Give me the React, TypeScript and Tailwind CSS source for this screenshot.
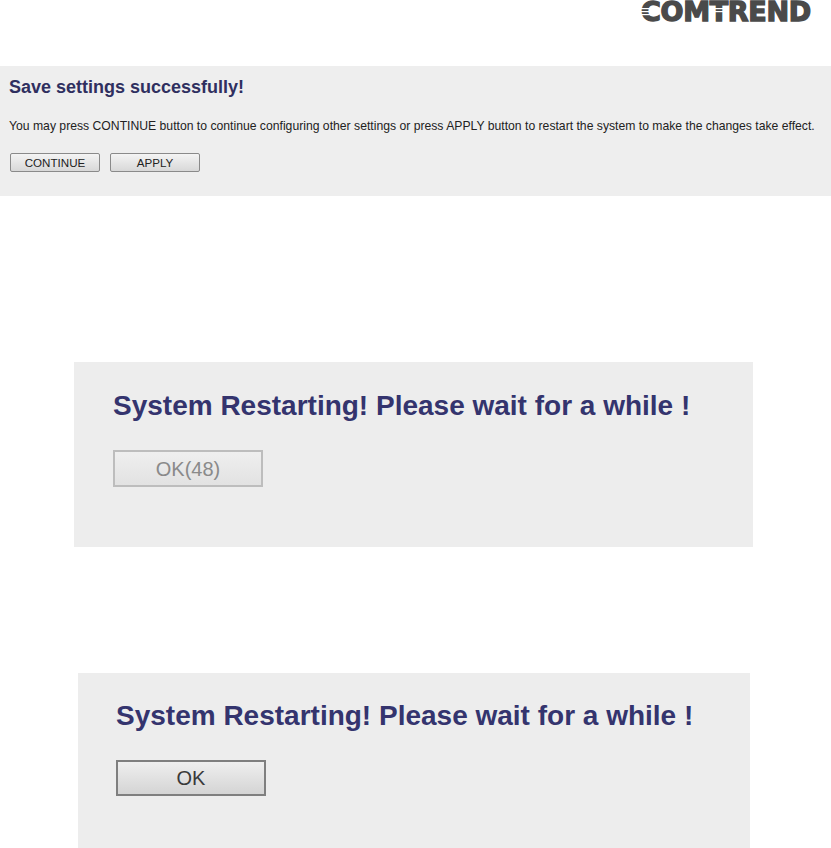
export default function App() {
  return (
    <div className="w-[831px] h-[848px] overflow-hidden bg-white font-['Liberation_Sans',Arial,sans-serif] flex flex-col">
      <header className="h-[66px] shrink-0 flex justify-end items-start pr-[20px]">
        <div className="relative w-[170px] h-[24px]">
          <span className="block font-['DejaVu_Sans',sans-serif] font-bold text-[27px] leading-[24px] tracking-[-0.3px] text-[#4a4a4a] whitespace-nowrap [-webkit-text-stroke:1.4px_#4a4a4a]">COMTREND</span>
          <svg className="absolute left-0 top-0" width="170" height="24" viewBox="0 0 170 24" aria-hidden="true">
            <g fill="#ffffff">
              <rect x="0" y="8" width="12" height="1.2" />
              <rect x="0" y="11" width="12" height="1.2" />
              <rect x="0" y="14" width="12" height="1.2" />
              <rect x="70" y="8" width="17" height="1.2" />
              <rect x="70" y="11" width="17" height="1.2" />
            </g>
          </svg>
        </div>
      </header>

      <section className="h-[130px] shrink-0 bg-[#eeeeee] pl-[9px] pt-[10px]">
        <h1 className="text-[18px] leading-[22px] font-bold text-[#2f2f5f] whitespace-nowrap">Save settings successfully!</h1>
        <p className="mt-[21px] text-[12.2px] leading-[14px] text-[#222222] whitespace-nowrap">You may press CONTINUE button to continue configuring other settings or press APPLY button to restart the system to make the changes take effect.</p>
        <div className="mt-[20px] ml-px flex gap-[10px]">
          <button className="w-[90px] h-[19px] rounded-[2px] border border-[#8a8a8a] bg-gradient-to-b from-[#f4f4f4] to-[#d8d8d8] text-[11.6px] leading-[16px] text-[#222222]">CONTINUE</button>
          <button className="w-[90px] h-[19px] rounded-[2px] border border-[#8a8a8a] bg-gradient-to-b from-[#f4f4f4] to-[#d8d8d8] text-[11.6px] leading-[16px] text-[#222222]">APPLY</button>
        </div>
      </section>

      <section className="mt-[166px] ml-[74px] w-[679px] h-[185px] shrink-0 bg-[#ededed] pl-[39px] pt-[27px]">
        <h2 className="text-[28px] leading-[34px] font-bold text-[#34346e] whitespace-nowrap">System Restarting! Please wait for a while !</h2>
        <button className="mt-[27px] block w-[150px] h-[37px] border-2 border-[#bdbdbd] bg-gradient-to-b from-[#efefef] to-[#e2e2e2] text-[20px] leading-[24px] text-[#8a8a8a]">OK(48)</button>
      </section>

      <section className="mt-[126px] ml-[78px] w-[672px] h-[175px] shrink-0 bg-[#ededed] pl-[38px] pt-[26px]">
        <h2 className="text-[28px] leading-[34px] font-bold text-[#34346e] whitespace-nowrap">System Restarting! Please wait for a while !</h2>
        <button className="mt-[27px] block w-[150px] h-[36px] border-2 border-[#7f7f7f] bg-gradient-to-b from-[#efefef] to-[#d4d4d4] text-[20px] leading-[24px] text-[#3a3a3a]">OK</button>
      </section>
    </div>
  );
}
